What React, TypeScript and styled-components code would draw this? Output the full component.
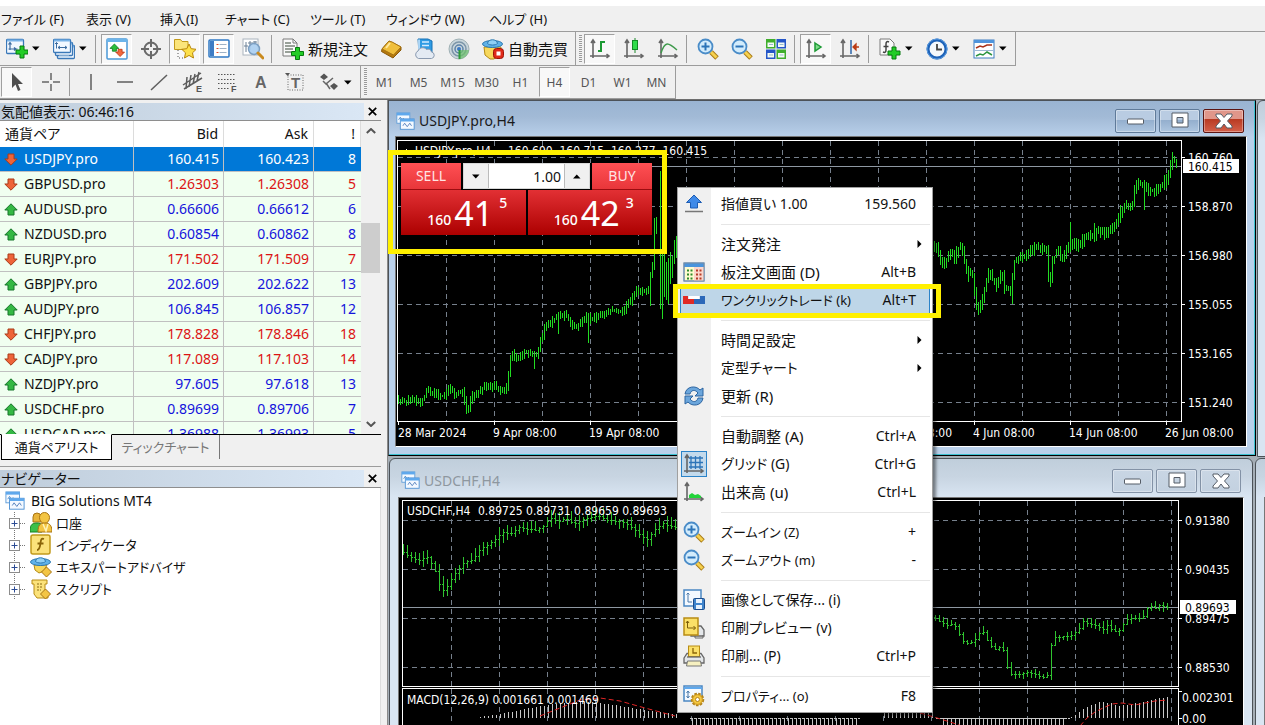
import React from "react";
import styled, { createGlobalStyle, css } from "styled-components";

const UI = `"Noto Sans", "Noto Sans CJK JP", sans-serif`;
const AXIS = `"DejaVu Sans Condensed", "DejaVu Sans", sans-serif`;

const Global = createGlobalStyle`
  *, *::before, *::after { box-sizing: border-box; }
  html, body { margin: 0; height: 100%; }
  #root { height: 100vh; }
  body { font-family: ${UI}; font-size: 14px; color: #111; background: #fff; font-feature-settings: "palt"; overflow: hidden; }
  button, input { font: inherit; font-feature-settings: inherit; color: inherit; margin: 0; }
  button { padding: 0; border: 0; background: none; }
  svg { display: block; flex: none; }
`;

const Page = styled.div`
  height: 100%;
  display: flex;
  flex-direction: column;
  padding-top: 6px;
`;
const MenuBar = styled.nav`
  height: 26px;
  flex: none;
  display: flex;
  align-items: center;
  background: #f0f0f0;
  border-bottom: 1px solid #9c9c9c;
`;
const MenuItem = styled.button<{ $w: number }>`
  width: ${(p) => p.$w}px;
  padding-left: 1px;
  text-align: left;
  white-space: nowrap;
  font-size: 13px;
  line-height: 20px;
`;
const ToolRow = styled.div<{ $h: number }>`
  height: ${(p) => p.$h}px;
  flex: none;
  display: flex;
  background: #f0f0f0;
`;
const ToolGroup = styled.div<{ $lead?: number }>`
  display: flex;
  align-items: center;
  padding-left: ${(p) => p.$lead || 0}px;
  border-right: 1px solid #9c9c9c;
  border-bottom: 1px solid #9c9c9c;
`;
const Grip = styled.span`
  width: 3px;
  height: 28px;
  margin: 0 2px 0 3px;
  background: repeating-linear-gradient(#9a9a9a 0 1px, #f4f4f4 1px 2px);
`;
const Sep = styled.span`
  width: 1px;
  height: 28px;
  margin-right: 5px;
  background: #9c9c9c;
`;
const ToolButton = styled.button<{ $on?: boolean }>`
  width: 31px;
  height: 30px;
  margin-right: 3px;
  display: flex;
  align-items: center;
  justify-content: center;
  border: 1px solid transparent;
  font-size: 12px;
  color: #555;
  ${(p) =>
    p.$on &&
    css`
      background: #f8f8f8;
      border-color: #a0a0a0 #fff #fff #a0a0a0;
    `}
`;
const SplitButton = styled.button`
  height: 30px;
  width: 47px;
  padding-left: 5px;
  display: flex;
  align-items: center;
  gap: 4px;
`;
const TextButton = styled.button`
  height: 30px;
  width: 98px;
  padding-left: 5px;
  display: flex;
  align-items: center;
  gap: 4px;
  font-size: 15px;
  line-height: 20px;
  white-space: nowrap;
`;
const Body = styled.main`
  flex: 1;
  min-height: 0;
  display: flex;
  background: #f0f0f0;
  border-top: 1px solid #6e6e6e;
`;
const Dock = styled.aside`
  width: 388px;
  flex: none;
  display: flex;
  flex-direction: column;
  padding-right: 6px;
  border-right: 1px solid #8a8a8a;
`;
const Panel = styled.section<{ $fill?: boolean }>`
  display: flex;
  flex-direction: column;
  min-height: 0;
  flex: ${(p) => (p.$fill ? "1" : "0 0 361px")};
  padding-top: 3px;
`;
const PanelTitle = styled.header`
  height: 18px;
  flex: none;
  display: flex;
  align-items: center;
  justify-content: space-between;
  border-bottom: 1px solid #8e8e8e;
`;
const PanelName = styled.h2`
  flex: 1;
  margin: 0;
  padding-left: 1px;
  font-size: 14px;
  font-weight: 400;
  line-height: 17px;
  height: 17px;
  overflow: hidden;
  background: linear-gradient(90deg, #bfcddb, #dae7f5);
`;
const CloseButton = styled.button`
  width: 17px;
  height: 16px;
  display: flex;
  align-items: center;
  justify-content: center;
`;
const QuoteArea = styled.div`
  flex: 1;
  min-height: 0;
  display: flex;
  overflow: hidden;
  background: #fff;
  border-bottom: 1px solid #000;
`;
const QuoteTable = styled.table`
  flex: 1;
  align-self: flex-start;
  border-collapse: separate;
  border-spacing: 0;
  table-layout: fixed;
  font-size: 14px;
  line-height: 20px;
`;
const HeadCell = styled.th<{ $left?: boolean }>`
  height: 26px;
  padding: 0 ${(p) => (p.$left ? 0 : 5)}px 0 ${(p) => (p.$left ? 5 : 0)}px;
  font-weight: 400;
  text-align: ${(p) => (p.$left ? "left" : "right")};
  border-right: 1px solid #dcdcdc;
`;
const QuoteRow = styled.tr<{ $selected?: boolean; $up?: boolean }>`
  background: ${(p) => (p.$selected ? "#0078d7" : "#f0fff0")};
  color: ${(p) => (p.$selected ? "#fff" : p.$up ? "#1414dc" : "#dc1414")};
`;
const Cell = styled.td`
  height: 25px;
  padding: 0 4px 0 0;
  text-align: right;
  border-right: 1px solid #c0c0c0;
  border-bottom: 1px solid #c0c0c0;
  &:last-child { border-right: 0; padding-right: 5px; }
`;
const SymbolCell = styled(Cell)<{ $selected?: boolean }>`
  text-align: left;
  color: ${(p) => (p.$selected ? "#fff" : "#111")};
`;
const SymbolName = styled.span`
  display: flex;
  align-items: center;
  gap: 6px;
  padding-left: 4px;
`;
const ScrollBar = styled.div`
  width: 20px;
  flex: none;
  display: flex;
  flex-direction: column;
  align-items: center;
  background: #f0f0f0;
`;
const ScrollArrow = styled.button`
  height: 20px;
  width: 20px;
  display: flex;
  align-items: center;
  justify-content: center;
`;
const ScrollTrack = styled.div`
  flex: 1;
  width: 20px;
  padding-top: 82px;
`;
const ScrollThumb = styled.div`
  height: 50px;
  margin-right: 1px;
  background: #cdcdcd;
`;
const Tabs = styled.div`
  height: 26px;
  flex: none;
  display: flex;
  padding-left: 1px;
`;
const Tab = styled.button<{ $active?: boolean }>`
  height: 24px;
  width: ${(p) => (p.$active ? 111 : 108)}px;
  font-size: 13px;
  line-height: 20px;
  white-space: nowrap;
  color: ${(p) => (p.$active ? "#111" : "#777")};
  border-right: 1px solid #777;
  ${(p) =>
    p.$active &&
    css`
      background: #fff;
      border: 1px solid #000;
      border-top-color: #fff;
      margin-top: -1px;
      height: 26px;
    `}
`;
const NavWrap = styled.div`
  flex: 1;
  min-height: 0;
  display: flex;
  flex-direction: column;
  margin-top: 5px;
  border-top: 1px solid #9c9c9c;
`;
const Tree = styled.ul`
  flex: 1;
  margin: 0;
  padding: 2px 0 0 5px;
  list-style: none;
  background: #fff;
  border-right: 1px solid #ddd;
`;
const TreeItem = styled.li<{ $root?: boolean }>`
  height: 22px;
  display: flex;
  align-items: center;
  gap: ${(p) => (p.$root ? 6 : 4)}px;
  font-size: ${(p) => (p.$root ? 14 : 13)}px;
  line-height: 20px;
`;

/* ---------- chart area ---------- */
const Desktop = styled.section`
  position: relative;
  flex: 1;
  min-width: 0;
  overflow: hidden;
  background: #a5aeb6;
`;
const Win = styled.article<{ $x: number; $y: number; $w: number; $h: number; $active?: boolean }>`
  position: absolute;
  left: ${(p) => p.$x}px;
  top: ${(p) => p.$y}px;
  width: ${(p) => p.$w}px;
  height: ${(p) => p.$h}px;
  display: flex;
  flex-direction: column;
  padding: 0 8px 8px ${(p) => (p.$active ? 6 : 8)}px;
  border: 1px solid #4c5258;
  border-radius: ${(p) => (p.$active ? 0 : "6px 6px 0 0")};
  background: ${(p) =>
    p.$active
      ? "linear-gradient(#9ab4d2, #a2bad6 16px, #b9d0ea 36px)"
      : "linear-gradient(#c0cedb, #c8d5e2 18px, #d9e5f2 38px)"};
  ${(p) => p.$active && "box-shadow: inset -1px -1px 0 #3cc0d0; border-bottom-color: #000; border-right-color: #000;"}
`;
const WinTitle = styled.header<{ $active?: boolean }>`
  height: ${(p) => (p.$active ? 35 : 38)}px;
  flex: none;
  display: flex;
  align-items: center;
  gap: 4px;
  padding: 5px 3px 0 ${(p) => (p.$active ? 1 : 3)}px;
  color: ${(p) => (p.$active ? "#1a1a1a" : "#8e979f")};
`;
const WinName = styled.h3`
  flex: 1;
  margin: 0;
  font-size: 14px;
  font-weight: 400;
  line-height: 20px;
`;
const WinButtons = styled.div`
  display: flex;
  gap: 3px;
`;
const WinButton = styled.button<{ $tone: "blue" | "red" | "grey" }>`
  width: 41px;
  height: 24px;
  display: flex;
  align-items: center;
  justify-content: center;
  border-radius: 2px;
  border: 1px solid ${(p) => ({ blue: "#5f7a99", red: "#5c1512", grey: "#8392a6" })[p.$tone]};
  box-shadow: inset 0 0 0 1px rgba(255, 255, 255, 0.35);
  background: ${(p) =>
    ({
      blue: "linear-gradient(#b9cce2 45%, #93aecd 45%, #aec6e0)",
      red: "linear-gradient(#e0968a 42%, #b93a22 42%, #d4604a)",
      grey: "linear-gradient(#c9d6e4, #c3d1e0)",
    })[p.$tone]};
`;
const Client = styled.div`
  flex: 1;
  min-height: 0;
  overflow: hidden;
  background: #000;
  border: 1px solid #fff;
  border-top-color: #777;
  border-left-color: #777;
`;
const Highlight = styled.div<{ $x: number; $y: number; $w: number; $h: number }>`
  position: absolute;
  left: ${(p) => p.$x}px;
  top: ${(p) => p.$y}px;
  width: ${(p) => p.$w}px;
  height: ${(p) => p.$h}px;
  border: 5px solid #fff000;
  pointer-events: none;
`;
const TradePanel = styled.form`
  position: absolute;
  left: 13px;
  top: 63px;
  width: 251px;
  background: #000;
  color: #fff;
`;
const TradeRow = styled.div`
  display: flex;
  gap: 2px;
`;
const SideTab = styled.button`
  width: 60px;
  height: 27px;
  flex: none;
  font-size: 14px;
  line-height: 20px;
  color: #ffe4e4;
  background: linear-gradient(#ff5054, #e8363a);
  border-bottom: 1px solid #9c0c10;
`;
const Spin = styled.div`
  flex: 1;
  min-width: 0;
  height: 26px;
  display: flex;
  color: #111;
  border: 1px solid #d8d8d8;
  background: #fff;
`;
const SpinButton = styled.button`
  width: 24px;
  flex: none;
  display: flex;
  align-items: center;
  justify-content: center;
  background: #f0f0f0;
`;
const Lots = styled.input`
  flex: 1;
  width: 0;
  min-width: 0;
  padding: 0 3px;
  text-align: right;
  border: 0;
  border-left: 1px solid #bbb;
  border-right: 1px solid #bbb;
`;
const PriceButton = styled.button`
  flex: 1;
  height: 45px;
  padding: 0 18px 0 26px;
  display: flex;
  align-items: flex-end;
  justify-content: center;
  color: #fff;
  background: linear-gradient(#e23034, #ac0000);
`;
const PriceHead = styled.span`
  font-size: 14px;
  font-weight: 500;
  line-height: 30px;
`;
const PriceBig = styled.span`
  padding: 0 6px 0 3px;
  font-size: 34px;
  line-height: 44px;
`;
const PriceTip = styled.span`
  align-self: flex-start;
  font-size: 14px;
  font-weight: 500;
  line-height: 26px;
`;
const Popup = styled.ul`
  position: absolute;
  left: 289px;
  top: 87px;
  width: 256px;
  margin: 0;
  padding: 2px;
  list-style: none;
  border: 1px solid #a0a0a0;
  background: linear-gradient(90deg, #f0f0f0 33px, #fff 33px);
  box-shadow: 3px 3px 3px rgba(0, 0, 0, 0.45);
`;
const PopupItem = styled.button<{ $hot?: boolean }>`
  width: 100%;
  height: 28px;
  display: flex;
  align-items: center;
  text-align: left;
  line-height: 20px;
  ${(p) =>
    p.$hot &&
    css`
      background: #bed6e8;
      box-shadow: inset 0 0 0 1px #2b83c8;
    `}
`;
const PopupIcon = styled.span<{ $on?: boolean }>`
  width: 26px;
  height: 26px;
  margin: 0 14px 0 1px;
  display: flex;
  align-items: center;
  justify-content: center;
  ${(p) => p.$on && "background: #c3daec; border: 1px solid #2b83c8;"}
`;
const PopupLabel = styled.span<{ $size: number }>`
  flex: 1;
  font-size: ${(p) => p.$size}px;
  white-space: nowrap;
`;
const PopupKey = styled.span<{ $arrow?: boolean }>`
  padding-right: ${(p) => (p.$arrow ? 8 : 14)}px;
`;
const PopupRule = styled.li`
  height: 12px;
  margin-left: 41px;
  background: linear-gradient(#e6e6e6, #e6e6e6) 0 6px / 100% 1px no-repeat;
`;

/* ---------- icons ---------- */
const I = ({ s = 22, children }: { s?: number; children: React.ReactNode }) => (
  <svg width={s} height={s} viewBox="0 0 22 22" fill="none" aria-hidden="true">
    {children}
  </svg>
);
const Caret = () => (
  <svg width="8" height="5" viewBox="0 0 8 5" aria-hidden="true"><path d="M0 .5h7.5L3.8 4.5z" fill="#000" /></svg>
);
const Plus = ({ x = 10, y = 9 }) => (
  <path transform={`translate(${x} ${y})`} d="M4 0h4v4h4v4H8v4H4V8H0V4h4z" fill="#22cc26" stroke="#067a0e" />
);
const Frame = ({ x = 0, y = 1, w = 17, h = 14 }) => (
  <g>
    <rect x={x + 0.5} y={y + 0.5} width={w} height={h} rx="1" fill="#f2f8ff" stroke="#3a78b8" strokeWidth="1.300" />
    <path d={`M${x + 1} ${y + 1.5}h${w - 1}`} stroke="#78b2e6" strokeWidth="2" />
  </g>
);
const NewChart = () => <I><Frame /><path d="M4 5v7M2.500 6.500 4 4.500l1.500 2M2.500 11h9M8 9.500l2 1.500-2 1.500" stroke="#3c6ca0" strokeWidth="1.200" /><Plus y={8} /></I>;
const Profiles = () => (
  <I><Frame x={4} y={7} w={17} h={13} /><Frame x={2} y={4} w={17} h={13} /><Frame x={0} y={1} w={17} h={13} />
    <path d="M3.500 4.500v6M2 6l1.500-1.500L5 6M5 9.500h9M7 8 5 9.500 7 11M12 8l2 1.500-2 1.500" stroke="#3c6ca0" />
    <path d="M6 17.500h10" stroke="#7ea6cf" /></I>
);
const up = "M5.500 0 11 5.500H8V9H3V5.500H0z";
const Market = () => (
  <I><rect x="1" y="1" width="20" height="20" rx="1" fill="#fff" stroke="#4a98d6" strokeWidth="1.500" /><path d="M1 2.500h20" stroke="#6cb4ea" strokeWidth="3" />
    <path d={up} transform="translate(4 6) scale(.8)" fill="#2bbf3a" stroke="#0d7a1c" />
    <path d={up} transform="translate(18.500 18.500) rotate(180) scale(.8)" fill="#f2683c" stroke="#b93410" /></I>
);
const Target = () => <I><circle cx="11" cy="11" r="6.500" stroke="#6a6a6a" strokeWidth="2" /><path d="M11 1v8M11 13v8M1 11h8M13 11h8" stroke="#6a6a6a" strokeWidth="2" /></I>;
const FolderStar = () => (
  <I><path d="M.5 1.500h6l1.500 2h6v8H.5z" fill="#fbe57a" stroke="#c29a1c" /><path d="M4 12v8h5" stroke="#555" strokeDasharray="1 2" />
    <path d="m15 6 2.200 4.700 5 .6-3.700 3.500 1 5.200-4.500-2.600L10.500 20l1-5.200L7.800 11.300l5-.6z" fill="#fde04a" stroke="#b88608" /></I>
);
const Terminal = () => (
  <I><rect x="1" y="2" width="20" height="17" rx="1" fill="#fff" stroke="#2f78c4" strokeWidth="1.500" /><path d="M2 3h4v15H2z" fill="#3f7cc4" />
    <path d="M8.500 6.500h2M8.500 10.500h2M8.500 14.500h2" stroke="#e05030" /><path d="M11.500 6.500h7M11.500 10.500h7M11.500 14.500h7" stroke="#9fb2c6" /></I>
);
const Tester = () => (
  <I><rect x="1" y="1" width="15" height="16" fill="#fff" stroke="#aab4be" /><path d="M4 4v10M8 3v9M13 3v4M2 8h4M6 5h5M11 4h4" stroke="#6b8096" />
    <circle cx="12" cy="11" r="5.500" fill="#a8cdf0" fillOpacity=".9" stroke="#7c9fc2" strokeWidth="1.500" /><path d="m16 15 5 5" stroke="#c98a1e" strokeWidth="3" strokeLinecap="round" /></I>
);
const NewOrder = () => (
  <I><path d="M1 1h10l4 4v13H1z" fill="#fafafa" stroke="#7a7a7a" /><path d="M11 1v4h4" stroke="#7a7a7a" /><path d="M3 5h6M3 8h10M3 11h8M3 14h6" stroke="#7a847a" strokeWidth="1.500" /><Plus x={9.5} y={9.5} /></I>
);
const Book = () => (
  <I><path d="m2 11 7-8 12 6v3l-8 8L1.500 13.500z" fill="#b5790e" stroke="#8c5a08" /><path d="m2 11 7-8c1 1 3 .5 4 1.500L21 9l-7.500 8z" fill="#f0bf3c" stroke="#a87412" /><path d="m6 10 4-5" stroke="#ffe9a0" strokeWidth="2" /></I>
);
const Cloud = () => (
  <I><path d="M4 1h10l4 2v12H5z" fill="#2f9be4" stroke="#1670b4" /><path d="M8 4h7M8 7.500h7M5 1.500v11" stroke="#d4ecff" strokeWidth="1.500" />
    <path d="M4.500 20.500a4 4 0 0 1-.5-7.500 5 5 0 0 1 8.500-1.500 3.500 3.500 0 0 1 5 2.500 3.300 3.300 0 0 1 0 6.500z" fill="#e3eaf3" stroke="#8a9ab0" /></I>
);
const Signal = () => (
  <I><circle cx="11" cy="11" r="10" fill="#c9d6dc" stroke="#9fb0b4" /><circle cx="11" cy="11" r="7" stroke="#7c95a8" strokeWidth="1.500" /><circle cx="11" cy="11" r="4" stroke="#5d83a8" strokeWidth="1.500" />
    <path d="M11 12h10a10 10 0 0 1-9 9z" fill="#6cc06a" fillOpacity=".7" /><circle cx="11" cy="11" r="2" fill="#3a78c4" /><path d="M11.500 12v9" stroke="#2e9a3a" strokeWidth="2" /></I>
);
const Hat = () => (
  <g><ellipse cx="10.500" cy="6" rx="10" ry="3.500" fill="#5fb2e8" stroke="#2a78b0" /><path d="M5.500 5.500C6 .5 15 .5 15.500 5.500c-2 2-8 2-10 0z" fill="#8fd0f6" stroke="#2a78b0" /></g>
);
const Robot = () => (
  <I><path d="M2 9h17l-2 8-5 4H8l-5-4z" fill="#f7d85c" stroke="#b48a14" /><Hat /><rect x="11.500" y="10.500" width="10" height="10" rx="3" fill="#e02a18" stroke="#9c1408" /><rect x="14.500" y="13.500" width="4" height="4" fill="#fff" /></I>
);
const Expert = () => (
  <I><path d="M4 9h13l-3 6-5 2-4-3z" fill="#f7d85c" stroke="#b48a14" /><Hat /><path d="m16.500 11 5 5-5 5-5-5z" fill="#f3c544" stroke="#a87412" /></I>
);
const axes = "M4 2v18M1 18h19M2 5l2-3 2 3M17.500 16l2.500 2-2.500 2";
const Axes = ({ children }: { children?: React.ReactNode }) => <I><path d={axes} stroke="#666" strokeWidth="1.600" />{children}</I>;
const BarIcon = () => <Axes><path d="M12 3v11M12 4h4M9 13h3" stroke="#1c9a34" strokeWidth="2" /></Axes>;
const CandleIcon = () => <Axes><path d="M12 0v15" stroke="#1c8a2a" /><rect x="9.500" y="2.500" width="5" height="9" fill="#2fdc4a" stroke="#128a24" /></Axes>;
const LineIcon = () => <Axes><path d="M4 15 C8 3 11 4 20 12" stroke="#3f9a4c" strokeWidth="1.500" /></Axes>;
const Zoom = ({ plus }: { plus?: boolean }) => (
  <I><path d="m14 14 6 6" stroke="#a87a14" strokeWidth="5" /><path d="m14 14 5.500 5.500" stroke="#f5d04e" strokeWidth="3" /><circle cx="8.500" cy="8.500" r="7" fill="#d3ecfc" stroke="#4a8cc8" strokeWidth="1.800" />
    <path d={plus ? "M4.500 8.500h8M8.500 4.500v8" : "M4.500 8.500h8"} stroke="#2c74b8" strokeWidth="2" /></I>
);
const Tile = () => (
  <I><rect x="1" y="1" width="9.500" height="9.500" fill="#3fae2c" /><rect x="11.500" y="1" width="9.500" height="9.500" fill="#2456c8" /><rect x="1" y="11.500" width="9.500" height="9.500" fill="#2456c8" /><rect x="11.500" y="11.500" width="9.500" height="9.500" fill="#3fae2c" />
    <path d="M2.500 4.500h6.500V9H2.500zM13 4.500h6.500V9H13zM2.500 15h6.500v4.500H2.500zM13 15h6.500v4.500H13z" fill="#f4fbf4" /><path d="M4 6.500h4M14.500 6.500h4M4 17h4M14.500 17h4" stroke="#9bc" /></I>
);
const AutoScroll = () => <Axes><path d="m10 5 6 4-6 4z" fill="#7fdc8a" stroke="#1c9a34" strokeWidth="1.500" /></Axes>;
const Shift = () => <Axes><path d="M12 2v14" stroke="#2c64a8" strokeWidth="1.500" /><path d="M20 9h-5M17 6 14 9l3 3z" stroke="#b83a14" fill="#d8501c" strokeWidth="1.300" /></Axes>;
const Indicators = () => (
  <I><path d="M1 1h10l4 4v12H1z" fill="#fafafa" stroke="#7a7a7a" /><path d="M10 4c-2-1-3 0-3 2v6c0 2-1 3-3 2M4.500 8.500h5" stroke="#444" strokeWidth="1.500" /><Plus x={9} y={9} /></I>
);
const Clock = () => (
  <I><circle cx="11" cy="11" r="9" fill="#f4f8fc" stroke="#1d62b8" strokeWidth="3" /><circle cx="11" cy="11" r="10" stroke="#5b9ce0" /><path d="M11 6v5.500h5" stroke="#444" strokeWidth="1.800" /></I>
);
const Template = () => (
  <I><rect x="1" y="2" width="20" height="18" fill="#fff" stroke="#3f7cc0" /><path d="M1 3.500h20" stroke="#4f94dc" strokeWidth="3" /><path d="M3 10l4-2 3 1 4-2 5 0" stroke="#a8321a" strokeWidth="1.500" /><path d="M2 12.500h18" stroke="#9db8d4" /><path d="m3 18 4-2 3 1 4-3 5 3" stroke="#2c9440" strokeWidth="1.500" /></I>
);
const Cursor = () => <I><path d="M6 2v15l3.500-3.500L12 20l2.500-1L12 13h5z" fill="#4e4e4e" /></I>;
const Cross = () => <I><path d="M11 2v7M11 13v7M2 11h7M13 11h7" stroke="#666" strokeWidth="1.500" /></I>;
const VLine = () => <I><path d="M11 3v16" stroke="#5e5e5e" strokeWidth="1.500" /></I>;
const HLine = () => <I><path d="M3 11h16" stroke="#5e5e5e" strokeWidth="1.500" /></I>;
const DLine = () => <I><path d="M3 19 19 4" stroke="#5e5e5e" strokeWidth="1.500" /></I>;
const Mark = styled.text`
  font: 700 9px "Liberation Sans", sans-serif;
  fill: #555;
`;
const Channel = () => <I><path d="M1 14 19 2M2 18 20 7M5 6l-1 12M9 4 7 16M13 3l-2 10M17 1l-2 9" stroke="#5c5c5c" strokeWidth="1.500" /><Mark x="14" y="21">E</Mark></I>;
const Fibo = () => <I><path d="M2 3.500h18M2 8.500h18M2 12.500h18M2 17.500h11" stroke="#555" strokeWidth="1.200" strokeDasharray="1.500 1.500" /><Mark x="15" y="21">F</Mark></I>;
const LetterA = () => <I><text x="5" y="17" fontFamily="Liberation Sans" fontWeight="700" fontSize="16" fill="#666">A</text></I>;
const LetterT = () => <I><rect x="4" y="4" width="15" height="15" stroke="#666" strokeDasharray="1 1.500" /><path d="M1 2h5L3.500 5z" fill="#555" /><text x="7" y="17" fontFamily="Liberation Sans" fontWeight="700" fontSize="15" fill="#666">T</text></I>;
const Shapes = () => <I><path d="m2 6 4-3.500L10 6l-4 3zM12 15l4-3 4 3-4 4z" fill="#555" /><path d="m5 10 3 3 7-6M8 12l4 6" stroke="#666" strokeWidth="1.500" /></I>;

const ChartWin = ({ s = 20 }) => (
  <I s={s}><rect x="1" y="1" width="15" height="12" fill="#f4f9ff" stroke="#5b9bd8" /><path d="M1 2.500h15" stroke="#5fa8ec" strokeWidth="3" /><path d="m3 9 2-3 2 3 2-2" stroke="#4a86c2" />
    <rect x="5" y="8" width="16" height="12" fill="#f4f9ff" stroke="#4a8ed2" /><path d="M5 9.500h16" stroke="#5fa8ec" strokeWidth="3" /><path d="m8 16 2-3 3 4 3-4 2 3" stroke="#4a78b8" /></I>
);
const Accounts = () => (
  <I><path d="M3 5a4 4 0 0 1 8 0v5H3z" fill="#e8b43a" stroke="#a87412" /><path d="M0 20c0-6 1-9 7-9s5 3 5 9z" fill="#3cc04a" stroke="#14801f" /><path d="M9.500 5.500a5 5 0 0 1 10 0c0 3-2 6-5 6s-5-3-5-6z" fill="#f3c544" stroke="#a87412" /><path d="M8 20c0-7 2-9 7-9s7 3 7 9z" fill="#f3c544" stroke="#a87412" /><path d="m13 12 3 7 2-7" stroke="#fff3b8" strokeWidth="1.500" /></I>
);
const Func = () => <I><rect x="1" y="1" width="19" height="19" rx="2" fill="#fbe27a" stroke="#c29a1c" strokeWidth="1.500" /><path d="M14 5c-3-1-3 1-3.500 4S10 16 7 16M7.500 9.500h6" stroke="#8a6408" strokeWidth="1.800" /></I>;
const Script = () => (
  <I><path d="M2 2h15v4h-2v9h3v5H7l-3-4V6H2z" fill="#fbe27a" stroke="#b88c14" /><path d="M7 6h6M7 9h5M7 12h4" stroke="#8a6a14" strokeDasharray="2 1" /><path d="m15.500 11 5 5-5 5-5-5z" fill="#f3c544" stroke="#a87412" /></I>
);
const Limit = () => <I><path d="m11 2 7.500 7.500H14.500v5.500h-7V9.500H3.500z" fill="#3f8ae8" stroke="#1c5cb4" /><path d="M2 18.500h18" stroke="#777" strokeWidth="1.500" /></I>;
const Depth = () => (
  <I><rect x="1" y="2" width="20" height="18" fill="#fffbd0" stroke="#4a86c2" /><path d="M11 6h10v14H11z" fill="#fbd6cc" /><path d="M1 4h20" stroke="#4a94dc" strokeWidth="4" /><rect x="1" y="2" width="20" height="18" stroke="#7a8ca0" />
    <path d="M4 9.500h6M4 13.500h6M4 17.500h6" stroke="#2f8a2c" strokeWidth="2" strokeDasharray="2 1.500" /><path d="M13 9.500h6M13 13.500h6M13 17.500h6" stroke="#b83a24" strokeWidth="2" strokeDasharray="2 1.500" /></I>
);
const OneClick = () => <I><path d="M0 7h5v3h6v5H0z" fill="#e02a24" /><path d="M22 7h-5v3h-6v5h11z" fill="#2c68b8" /><path d="M5.500 7h11v3h-11z" fill="#fff" /></I>;
const Refresh = () => (
  <I><path d="M2 9c1-8 11-9 15-4l3-2v8h-8l3-3C12 4 8 5 7 9z" fill="#6ba6dc" stroke="#2c64a0" /><path d="M20 13c-1 8-11 9-15 4l-3 2v-8h8l-3 3c3 4 7 3 8-1z" fill="#6ba6dc" stroke="#2c64a0" /></I>
);
const GridIcon = () => <Axes><path d="M8 3v13M12.500 3v13M17 3v13M6 5h14M6 9.500h14M6 14h14" stroke="#2c74b8" strokeWidth="1.300" /></Axes>;
const Volumes = () => <Axes><path d="M6 17v-3l3-2 3 2 3-1 3 2v2z" fill="#22d43a" /></Axes>;
const SavePic = () => (
  <I><rect x="1" y="1" width="17" height="16" fill="#f4f9ff" stroke="#4a86c2" strokeWidth="1.500" /><path d="M5 4v9M3.500 5.500 5 4l1.500 1.500M5 13h4" stroke="#4a78a8" /><rect x="10.500" y="9.500" width="11" height="11" rx="1" fill="#3f84cc" stroke="#1c4c8a" /><path d="M13 10h6v4h-6zM13 16h6v4h-6z" fill="#e8f2fc" /></I>
);
const Preview = () => (
  <I><path d="M8 9h10l3 4v6H8z" fill="#e4e7ea" stroke="#666" strokeWidth="1.300" /><path d="M12 19v2h8v-3" stroke="#666" /><rect x="1" y="1" width="14" height="17" fill="#fbe068" stroke="#b88c14" strokeWidth="1.500" /><path d="M4.500 4v7h8M3 6l1.500-2L6 6M10.500 9l2 2-2 2" stroke="#7c5c08" /></I>
);
const Print = () => (
  <I><path d="M1 13 4 8.500h14l3 4.500v5H1z" fill="#e4e7ea" stroke="#666" strokeWidth="1.300" /><rect x="5.500" y="1" width="11" height="10.500" fill="#fbe068" stroke="#b88c14" /><path d="M10 3v5h4" stroke="#8a6408" strokeWidth="1.300" /><path d="M4 12h14" stroke="#666" strokeWidth="1.300" /><path d="M4.500 16h13l1 5h-15z" fill="#f6f0c0" stroke="#777" /></I>
);
const Props = () => (
  <I><rect x="1" y="1" width="18" height="15" fill="#f4f9ff" stroke="#4a86c2" strokeWidth="1.500" /><path d="M1 3h18" stroke="#5fa8ec" strokeWidth="2" /><path d="M5 6v7M3.500 8 5 6l1.500 2M3.500 11 5 13l1.500-2" stroke="#4a78a8" />
    <circle cx="14.500" cy="14.500" r="5.500" fill="#f5c840" stroke="#b4841c" strokeWidth="2.500" strokeDasharray="2.500 1.200" /><circle cx="14.500" cy="14.500" r="4.800" fill="#f5c840" stroke="#d09c24" /><circle cx="14.500" cy="14.500" r="2" fill="#fff" stroke="#b4841c" /></I>
);
const MinIcon = () => <I><rect x="2.500" y="9" width="16" height="5" rx="1" fill="#fff" stroke="#555c66" /></I>;
const MaxIcon = () => <I><path d="M3 3h16v14H3zM8 7.500v5.500h6V7.500z" fillRule="evenodd" fill="#fff" stroke="#555c66" /></I>;
const XIcon = () => <I><path d="M3 4h5l3 3.500L14 4h5v2l-4.500 5 4.500 5v2h-5l-3-4-3 4H3v-2l4.500-5L3 6z" fill="#fff" stroke="#555c66" /></I>;
const SmallX = () => <svg width="9" height="9" viewBox="0 0 9 9" aria-hidden="true"><path d="m.8.8 7.400 7.400M8.200.8.800 8.200" stroke="#000" strokeWidth="1.700" /></svg>;
const Arrow = ({ up: isUp }: { up?: boolean }) => (
  <svg width="14" height="13" viewBox="0 0 14 13" aria-hidden="true">
    {isUp ? (
      <path d="M7 .8 13.200 7H10v5H4V7H.8z" fill="#33b843" stroke="#17762a" />
    ) : (
      <path d="M7 12.200.8 6H4V1h6v5h3.200z" fill="#ee6438" stroke="#a83a18" />
    )}
  </svg>
);
const Chevron = ({ flip }: { flip?: boolean }) => (
  <svg width="10" height="6" viewBox="0 0 10 6" aria-hidden="true"><path d={flip ? "m.8 1 4.200 4L9.200 1" : "m.8 5 4.200-4 4.200 4"} fill="none" stroke="#555" strokeWidth="2" /></svg>
);
const Expand = () => (
  <svg width="21" height="22" viewBox="0 0 21 22" fill="none" aria-hidden="true">
    <path d="M9.500 0v22M15 11.500h6" stroke="#777" strokeDasharray="1 1" /><rect x="4.500" y="6.500" width="10" height="10" fill="#fff" stroke="#8c8c8c" /><path d="M6.500 11.500h6M9.500 8.500v6" stroke="#2c4c94" />
  </svg>
);

/* ---------- chart drawing ---------- */
type Pt = [number, number];
const at = (pts: Pt[], x: number) => {
  for (let i = 1; i < pts.length; i++) {
    if (x <= pts[i][0]) {
      const [a, b] = [pts[i - 1], pts[i]];
      return a[1] + ((b[1] - a[1]) * (x - a[0])) / (b[0] - a[0]);
    }
  }
  return pts[pts.length - 1][1];
};
const rnd = (n: number) => {
  const v = Math.sin(n * 12.9898) * 43758.5453;
  return v - Math.floor(v);
};
const bars = (pts: Pt[], step: number, base: number, ticks: boolean) => {
  let d = "";
  for (let x = pts[0][0]; x <= pts[pts.length - 1][0]; x += step) {
    const prev = at(pts, Math.max(pts[0][0], x - step / 2));
    const next = at(pts, x + step / 2);
    const hi = Math.round(Math.min(prev, next) - base * (0.2 + 1.2 * rnd(x)));
    const lo = Math.round(Math.max(prev, next) + base * (0.2 + 1.2 * rnd(x + 7)));
    d += `M${x + 0.5} ${hi}V${lo}`;
    if (ticks) d += `M${x - 1} ${Math.round(prev) + 0.5}h2M${x + 1} ${Math.round(next) + 0.5}h1`;
  }
  return d;
};

const usdLeft: Pt[] = [[398, 400], [406, 401], [412, 399], [418, 402], [424, 400], [426, 392], [434, 392], [442, 396], [446, 396], [449, 388], [455, 394], [463, 392], [466, 405], [468, 411], [472, 397], [480, 391], [484, 387], [495, 386], [500, 391], [507, 388], [509, 376], [511, 360], [513, 354], [517, 359], [521, 355], [530, 351], [534, 357], [538, 354], [541, 340], [546, 325], [550, 324], [556, 318], [560, 316], [568, 316], [572, 325], [577, 328], [582, 320], [588, 317], [592, 320], [600, 315], [610, 311], [620, 312], [626, 308], [632, 300], [638, 289], [644, 293], [648, 289]];
const usdRight: Pt[] = [[934, 243], [937, 248], [940, 258], [943, 264], [948, 259], [952, 252], [955, 261], [958, 249], [962, 247], [965, 262], [968, 276], [972, 271], [974, 282], [976, 300], [979, 311], [983, 300], [987, 280], [989, 273], [992, 278], [997, 286], [1000, 278], [1003, 273], [1005, 288], [1010, 288], [1012, 294], [1013, 275], [1015, 262], [1020, 258], [1024, 257], [1030, 252], [1035, 248], [1040, 249], [1047, 250], [1049, 275], [1051, 280], [1053, 262], [1058, 250], [1062, 258], [1067, 252], [1071, 243], [1077, 246], [1083, 240], [1088, 233], [1093, 237], [1097, 231], [1103, 233], [1110, 232], [1116, 227], [1118, 220], [1122, 209], [1128, 206], [1133, 204], [1135, 187], [1140, 183], [1144, 187], [1150, 190], [1155, 192], [1160, 186], [1166, 181], [1170, 171], [1173, 159], [1177, 163]];
const usdSpikes = "M650.500 272v34M652.500 262v16M654.500 218v52M656.500 217v17M660.500 171v138M662.500 230v89M664.500 245v52M666.500 262v38M668.500 258v46M670.500 252v32M672.500 256v22M674.500 240v24M676.500 236v22M558.500 312v22M588.500 315v28M534.500 352v17M466.500 396v18M1070.500 222v30M1144.500 184v26M1094.500 223v18M1012.500 282v22M1048.500 245v36";
const chfLeft: Pt[] = [[403, 550], [412, 557], [420, 560], [428, 556], [436, 567], [440, 582], [446, 592], [452, 580], [458, 571], [466, 562], [474, 560], [482, 548], [490, 545], [498, 538], [506, 531], [512, 534], [520, 527], [536, 530], [544, 527], [552, 518], [560, 521], [568, 518], [576, 524], [584, 519], [600, 515], [608, 520], [624, 521], [632, 526], [640, 533], [648, 540], [656, 530], [664, 523], [676, 527]];
const chfRight: Pt[] = [[935, 617], [940, 620], [948, 625], [955, 623], [960, 631], [963, 640], [970, 643], [976, 640], [982, 631], [986, 632], [990, 642], [996, 649], [1002, 646], [1006, 651], [1009, 667], [1012, 674], [1020, 674], [1028, 672], [1036, 673], [1044, 677], [1050, 675], [1052, 647], [1057, 637], [1072, 636], [1080, 630], [1084, 621], [1092, 624], [1100, 625], [1104, 631], [1108, 624], [1113, 629], [1120, 632], [1124, 625], [1130, 618], [1140, 618], [1146, 615], [1149, 608], [1152, 605], [1156, 609], [1160, 605], [1169, 607]];
const macdTop: Pt[] = [[480, 717], [500, 714], [530, 708], [560, 703], [590, 702], [620, 706], [650, 711], [676, 714]];
const macdRight: Pt[] = [[1071, 717], [1077, 714], [1083, 709], [1090, 705], [1100, 702], [1110, 703], [1120, 706], [1130, 704], [1145, 702], [1155, 699], [1169, 697]];

const columns = (from: number, to: number, step: number, topOf: (x: number) => number, bottom: number) => {
  let d = "";
  for (let x = from; x <= to; x += step) d += `M${x + 0.5} ${Math.round(topOf(x))}V${bottom}`;
  return d;
};
const range = (from: number, to: number, step: number) => {
  const out: number[] = [];
  for (let v = from; v <= to; v += step) out.push(v);
  return out;
};
const grid = (xs: number[], ys: number[], l: number, r: number, t: number, b: number) =>
  xs.map((x) => `M${x + 0.5} ${t}V${b}`).join("") + ys.map((y) => `M${l} ${y + 0.5}H${r}`).join("");

const Label = styled.text<{ $dark?: boolean }>`
  font: 12px ${AXIS};
  fill: ${(p) => (p.$dark ? "#000" : "#fff")};
  white-space: pre;
`;

const usdXs = range(446, 1170, 48);
const usdYs = range(157, 402, 49);
const UsdChart = () => (
  <svg width="850" height="309" viewBox="396 137 850 309" fill="none" shapeRendering="crispEdges" role="img" aria-label="USDJPY.pro H4">
    <path d={grid(usdXs, usdYs, 398, 1181, 141, 421)} stroke="#76808c" strokeDasharray="5 4" />
    <path d="M398 166.500H1182" stroke="#8e98a2" />
    <path d={bars(usdLeft, 2, 4, false) + bars(usdRight, 2, 5, false) + usdSpikes} stroke="#22dc22" />
    <path d="M397.500 140.500H1181.500V421.500H397.500z" stroke="#fff" />
    <path d={usdYs.map((y) => `M1182 ${y + 0.5}h3`).join("") + range(398, 1170, 96).map((x) => `M${x + 0.5} 422v3`).join("")} stroke="#fff" />
    <path d="m402 153 4-4 4 4z" fill="#fff" />
    <Label x="415" y="155">USDJPY.pro,H4</Label>
    <Label x="508" y="155">160.690  160.715  160.277  160.415</Label>
    {["160.760", "158.870", "156.980", "155.055", "153.165", "151.240"].map((t, i) => <Label key={t} x="1188" y={162 + i * 49}>{t}</Label>)}
    <rect x="1183" y="159" width="56" height="14" fill="#fff" />
    <Label $dark x="1188" y="171">160.415</Label>
    {([["28 Mar 2024", 398], ["9 Apr 08:00", 493], ["19 Apr 08:00", 589], ["23 May 08:00", 878], ["4 Jun 08:00", 973], ["14 Jun 08:00", 1069], ["26 Jun 08:00", 1165]] as [string, number][]).map(([t, x]) => <Label key={t} x={x} y="437">{t}</Label>)}
  </svg>
);

const chfXs = range(451, 1172, 48);
const chfYs = range(520, 667, 49);
const ChfChart = () => (
  <svg width="844" height="260" viewBox="399 498 844 260" fill="none" shapeRendering="crispEdges" role="img" aria-label="USDCHF H4">
    <path d={grid(chfXs, chfYs, 403, 1178, 501, 686) + grid(chfXs, [], 0, 0, 689, 758)} stroke="#76808c" strokeDasharray="5 4" />
    <path d="M403 607.500H1179" stroke="#8e98a2" />
    <path d={bars(chfLeft, 4, 6, true) + bars(chfRight, 4, 4, true)} stroke="#2fc42f" />
    <path d="M402.500 500.500H1178.500V686.500H402.500zM402.500 688.500H1178.500V758H402.500z" stroke="#fff" />
    <path d={chfYs.map((y) => `M1179 ${y + 0.5}h3`).join("") + "M1179 691.500h3M1179 718.500h3"} stroke="#fff" />
    <path d={columns(480, 676, 4, (x) => at(macdTop, x), 718) + columns(692, 856, 4, () => 718, 740) + columns(884, 932, 4, () => 713, 718) + columns(943, 1066, 4, () => 718, 740) + columns(1071, 1169, 4, (x) => at(macdRight, x), 718)} stroke="#c8c8c8" />
    <path d="M690 718.500H860M936 718.500H1070" stroke="#c8c8c8" strokeDasharray="3 1" />
    <path d="M540 716l20-8 20-8 20-2 20 3 25 7 30 8M920 713l14 4 16 5 12 4M1080 726l7-8 8-6 8-4 9-4 10-1 13 2 10-2 10-2 13-1" stroke="#e02424" strokeDasharray="5 3" shapeRendering="auto" />
    <Label x="407" y="515">USDCHF,H4</Label>
    <Label x="478" y="515">0.89725 0.89731 0.89659 0.89693</Label>
    <Label x="407" y="704">MACD(12,26,9) 0.001661 0.001469</Label>
    {["0.91380", "0.90435", "0.89475", "0.88530"].map((t, i) => <Label key={t} x="1185" y={525 + i * 49}>{t}</Label>)}
    <rect x="1180" y="600" width="56" height="14" fill="#fff" />
    <Label $dark x="1185" y="612">0.89693</Label>
    <Label x="1182" y="702">0.002301</Label>
    <Label x="1182" y="723">0.00</Label>
  </svg>
);

const menus: [string, number][] = [["ファイル (F)", 85], ["表示 (V)", 74], ["挿入(I)", 65], ["チャート (C)", 85], ["ツール (T)", 76], ["ウィンドウ (W)", 103], ["ヘルプ (H)", 80]];
const quotes: [string, string, string, string, boolean][] = [
  ["USDJPY.pro", "160.415", "160.423", "8", false],
  ["GBPUSD.pro", "1.26303", "1.26308", "5", false],
  ["AUDUSD.pro", "0.66606", "0.66612", "6", true],
  ["NZDUSD.pro", "0.60854", "0.60862", "8", true],
  ["EURJPY.pro", "171.502", "171.509", "7", false],
  ["GBPJPY.pro", "202.609", "202.622", "13", true],
  ["AUDJPY.pro", "106.845", "106.857", "12", true],
  ["CHFJPY.pro", "178.828", "178.846", "18", false],
  ["CADJPY.pro", "117.089", "117.103", "14", false],
  ["NZDJPY.pro", "97.605", "97.618", "13", true],
  ["USDCHF.pro", "0.89699", "0.89706", "7", true],
  ["USDCAD.pro", "1.36988", "1.36993", "5", true],
];
type Entry = { label: string; size?: number; keys?: string; icon?: React.ReactNode; sub?: boolean; hot?: boolean; on?: boolean } | null;
const popup: Entry[] = [
  { label: "指値買い 1.00", keys: "159.560", icon: <Limit /> },
  null,
  { label: "注文発注", size: 15, sub: true },
  { label: "板注文画面 (D)", size: 15, keys: "Alt+B", icon: <Depth /> },
  { label: "ワンクリックトレード (k)", size: 13, keys: "Alt+T", icon: <OneClick />, hot: true },
  null,
  { label: "時間足設定", size: 15, sub: true },
  { label: "定型チャート", sub: true },
  { label: "更新 (R)", size: 15, icon: <Refresh /> },
  null,
  { label: "自動調整 (A)", size: 15, keys: "Ctrl+A" },
  { label: "グリッド (G)", keys: "Ctrl+G", icon: <GridIcon />, on: true },
  { label: "出来高 (u)", size: 15, keys: "Ctrl+L", icon: <Volumes /> },
  null,
  { label: "ズームイン (Z)", size: 13, keys: "+", icon: <Zoom plus /> },
  { label: "ズームアウト (m)", size: 13, keys: "-", icon: <Zoom /> },
  null,
  { label: "画像として保存... (i)", icon: <SavePic /> },
  { label: "印刷プレビュー (v)", icon: <Preview /> },
  { label: "印刷... (P)", keys: "Ctrl+P", icon: <Print /> },
  null,
  { label: "プロパティ... (o)", size: 13, keys: "F8", icon: <Props /> },
];

const Tool = ({ name, on, children }: { name: string; on?: boolean; children: React.ReactNode }) => (
  <ToolButton type="button" aria-label={name} $on={on}>{children}</ToolButton>
);
const Split = ({ name, children }: { name: string; children: React.ReactNode }) => (
  <SplitButton type="button" aria-label={name}>{children}<Caret /></SplitButton>
);
const Controls = ({ active }: { active?: boolean }) => (
  <WinButtons>
    <WinButton type="button" aria-label="最小化" $tone={active ? "blue" : "grey"}><MinIcon /></WinButton>
    <WinButton type="button" aria-label="最大化" $tone={active ? "blue" : "grey"}><MaxIcon /></WinButton>
    <WinButton type="button" aria-label="閉じる" $tone={active ? "red" : "grey"}><XIcon /></WinButton>
  </WinButtons>
);

export default function App() {
  return (
    <Page>
      <Global />
      <MenuBar>
        {menus.map(([t, w]) => <MenuItem key={t} type="button" $w={w}>{t}</MenuItem>)}
      </MenuBar>
      <ToolRow $h={34}>
        <ToolGroup $lead={1}>
          <Split name="新規チャート"><NewChart /></Split>
          <Split name="チャートの組表示"><Profiles /></Split>
          <Sep />
          <Tool name="気配値表示" on><Market /></Tool>
          <Tool name="データウィンドウ"><Target /></Tool>
          <Tool name="ナビゲーター" on><FolderStar /></Tool>
          <Tool name="ターミナル" on><Terminal /></Tool>
          <Tool name="ストラテジーテスター"><Tester /></Tool>
          <Sep />
          <TextButton type="button"><NewOrder />新規注文</TextButton>
          <Tool name="MetaEditor"><Book /></Tool>
          <Tool name="VPS"><Cloud /></Tool>
          <Tool name="シグナル"><Signal /></Tool>
          <TextButton type="button"><Robot />自動売買</TextButton>
        </ToolGroup>
        <ToolGroup>
          <Grip />
          <Tool name="バーチャート" on><BarIcon /></Tool>
          <Tool name="ローソク足"><CandleIcon /></Tool>
          <Tool name="ラインチャート"><LineIcon /></Tool>
          <Sep />
          <Tool name="ズームイン"><Zoom plus /></Tool>
          <Tool name="ズームアウト"><Zoom /></Tool>
          <Tool name="整列"><Tile /></Tool>
          <Sep />
          <Tool name="自動スクロール" on><AutoScroll /></Tool>
          <Tool name="チャートシフト"><Shift /></Tool>
          <Sep />
          <Split name="インディケータリスト"><Indicators /></Split>
          <Split name="時間足設定"><Clock /></Split>
          <Split name="定型チャート"><Template /></Split>
        </ToolGroup>
      </ToolRow>
      <ToolRow $h={33}>
        <ToolGroup $lead={1}>
          <Tool name="カーソル" on><Cursor /></Tool>
          <Tool name="クロスヘアカーソル"><Cross /></Tool>
          <Sep />
          <Tool name="垂直線"><VLine /></Tool>
          <Tool name="水平線"><HLine /></Tool>
          <Tool name="トレンドライン"><DLine /></Tool>
          <Tool name="チャネル"><Channel /></Tool>
          <Tool name="フィボナッチ"><Fibo /></Tool>
          <Tool name="テキスト"><LetterA /></Tool>
          <Tool name="ラベル"><LetterT /></Tool>
          <Split name="矢印"><Shapes /></Split>
        </ToolGroup>
        <ToolGroup>
          <Grip />
          {["M1", "M5", "M15", "M30", "H1", "H4", "D1", "W1", "MN"].map((t) => <ToolButton key={t} type="button" $on={t === "H4"}>{t}</ToolButton>)}
        </ToolGroup>
      </ToolRow>
      <Body>
        <Dock>
          <Panel>
            <PanelTitle>
              <PanelName>気配値表示: 06:46:16</PanelName>
              <CloseButton type="button" aria-label="閉じる"><SmallX /></CloseButton>
            </PanelTitle>
            <QuoteArea>
              <QuoteTable>
                <colgroup><col width="134" /><col width="90" /><col width="90" /><col width="47" /></colgroup>
                <thead>
                  <tr><HeadCell $left>通貨ペア</HeadCell><HeadCell>Bid</HeadCell><HeadCell>Ask</HeadCell><HeadCell>!</HeadCell></tr>
                </thead>
                <tbody>
                  {quotes.map(([name, bid, ask, spread, isUp], i) => (
                    <QuoteRow key={name} $selected={i === 0} $up={isUp}>
                      <SymbolCell $selected={i === 0}><SymbolName><Arrow up={isUp} />{name}</SymbolName></SymbolCell>
                      <Cell>{bid}</Cell><Cell>{ask}</Cell><Cell>{spread}</Cell>
                    </QuoteRow>
                  ))}
                </tbody>
              </QuoteTable>
              <ScrollBar>
                <ScrollArrow type="button" aria-label="上へ"><Chevron /></ScrollArrow>
                <ScrollTrack><ScrollThumb /></ScrollTrack>
                <ScrollArrow type="button" aria-label="下へ"><Chevron flip /></ScrollArrow>
              </ScrollBar>
            </QuoteArea>
            <Tabs>
              <Tab type="button" $active>通貨ペアリスト</Tab>
              <Tab type="button">ティックチャート</Tab>
            </Tabs>
          </Panel>
          <NavWrap>
            <Panel $fill>
              <PanelTitle>
                <PanelName>ナビゲーター</PanelName>
                <CloseButton type="button" aria-label="閉じる"><SmallX /></CloseButton>
              </PanelTitle>
              <Tree>
                <TreeItem $root><ChartWin />BIG Solutions MT4</TreeItem>
                <TreeItem><Expand /><Accounts />口座</TreeItem>
                <TreeItem><Expand /><Func />インディケータ</TreeItem>
                <TreeItem><Expand /><Expert />エキスパートアドバイザ</TreeItem>
                <TreeItem><Expand /><Script />スクリプト</TreeItem>
              </Tree>
            </Panel>
          </NavWrap>
        </Dock>
        <Desktop>
          <Win $x={869} $y={0} $w={400} $h={357}><WinTitle /><Client /></Win>
          <Win $x={867} $y={358} $w={400} $h={400}><WinTitle /><Client /></Win>
          <Win $x={1} $y={358} $w={864} $h={400}>
            <WinTitle><ChartWin s={19} /><WinName>USDCHF,H4</WinName><Controls /></WinTitle>
            <Client><ChfChart /></Client>
          </Win>
          <Win $active $x={0} $y={0} $w={868} $h={356}>
            <WinTitle $active><ChartWin s={19} /><WinName>USDJPY.pro,H4</WinName><Controls active /></WinTitle>
            <Client><UsdChart /></Client>
          </Win>
          <TradePanel>
            <TradeRow>
              <SideTab type="button">SELL</SideTab>
              <Spin>
                <SpinButton type="button" aria-label="減らす"><Caret /></SpinButton>
                <Lots aria-label="ロット" defaultValue="1.00" />
                <SpinButton type="button" aria-label="増やす">
                  <svg width="8" height="5" viewBox="0 0 8 5" aria-hidden="true"><path d="M0 4.500h7.500L3.800.5z" fill="#000" /></svg>
                </SpinButton>
              </Spin>
              <SideTab type="button">BUY</SideTab>
            </TradeRow>
            <TradeRow>
              <PriceButton type="button"><PriceHead>160</PriceHead><PriceBig>41</PriceBig><PriceTip>5</PriceTip></PriceButton>
              <PriceButton type="button"><PriceHead>160</PriceHead><PriceBig>42</PriceBig><PriceTip>3</PriceTip></PriceButton>
            </TradeRow>
          </TradePanel>
          <Highlight $x={0} $y={50} $w={279} $h={104} />
          <Popup>
            {popup.map((e, i) =>
              e ? (
                <li key={i}>
                  <PopupItem type="button" $hot={e.hot}>
                    <PopupIcon $on={e.on}>{e.icon}</PopupIcon>
                    <PopupLabel $size={e.size || 14}>{e.label}</PopupLabel>
                    <PopupKey $arrow={e.sub}>
                      {e.sub ? <svg width="5" height="8" viewBox="0 0 5 8" aria-hidden="true"><path d="M.5 0v8L4.500 4z" fill="#000" /></svg> : e.keys}
                    </PopupKey>
                  </PopupItem>
                </li>
              ) : (
                <PopupRule key={i} role="separator" />
              ),
            )}
          </Popup>
          <Highlight $x={285} $y={184} $w={268} $h={34} />
        </Desktop>
      </Body>
    </Page>
  );
}
